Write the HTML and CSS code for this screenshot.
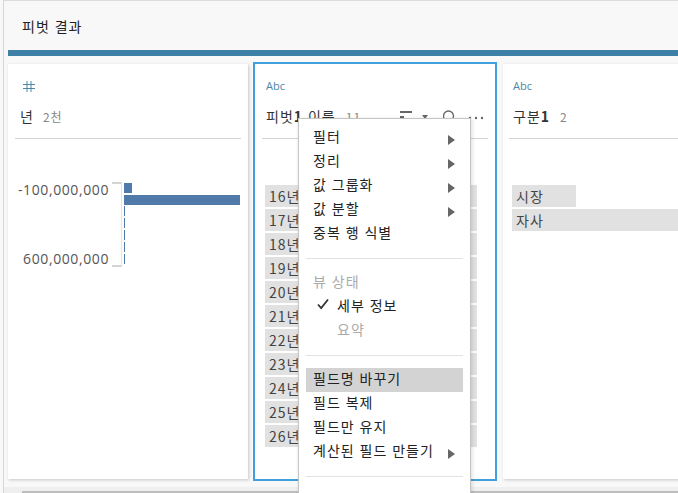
FILE: index.html
```html
<!DOCTYPE html>
<html lang="ko">
<head>
<meta charset="utf-8">
<title>피벗 결과</title>
<link rel="stylesheet" href="styles.css">
</head>
<body>
<div class="app">
  <header class="head">피벗 결과</header>
  <div class="bar"></div>
  <main class="cards">
    <section class="card c1">
      <div class="type num">
        <svg width="12" height="11" viewBox="0 0 12 11"><path d="M4 0v11M8 0v11M0 3.5h12M0 7.5h12" stroke="#4a87a8" stroke-width="1" fill="none"/></svg>
      </div>
      <div class="title"><span class="name">년</span><span class="count">2천</span></div>
      <div class="chart">
        <div class="axis-labels"><span>-100,000,000</span><span>600,000,000</span></div>
        <div class="axis"></div>
        <div class="bars">
          <div class="b small"></div>
          <div class="b big"></div>
          <div class="dash"></div>
        </div>
      </div>
    </section>
    <section class="card c2">
      <div class="type">Abc</div>
      <div class="title">
        <span class="name">피벗<b>1</b> 이름</span><span class="count">11</span>
        <span class="tools">
          <svg width="34" height="12" viewBox="0 0 34 12"><path d="M0 1h12v2H0zM0 6h4v3H0z" fill="#666"/><path d="M22 5h6l-3 4z" fill="#666"/></svg>
          <svg class="search" width="14" height="12" viewBox="0 0 14 12"><circle cx="6.5" cy="6" r="5" stroke="#666" stroke-width="1.3" fill="none"/></svg>
          <svg class="dots" width="16" height="4" viewBox="0 0 16 4"><circle cx="2" cy="2" r="1.2" fill="#666"/><circle cx="8" cy="2" r="1.2" fill="#666"/><circle cx="14" cy="2" r="1.2" fill="#666"/></svg>
        </span>
      </div>
      <ul class="vals">
        <li>16년</li><li>17년</li><li>18년</li><li>19년</li><li>20년</li><li>21년</li><li>22년</li><li>23년</li><li>24년</li><li>25년</li><li>26년</li>
      </ul>
    </section>
    <section class="card c3">
      <div class="type">Abc</div>
      <div class="title"><span class="name">구분<b>1</b></span><span class="count">2</span></div>
      <ul class="vals">
        <li class="short">시장</li><li>자사</li>
      </ul>
    </section>
  </main>
  <div class="scroll"><div class="thumb"></div></div>
</div>
<nav class="menu">
  <div class="item">필터<i class="arrow"></i></div>
  <div class="item">정리<i class="arrow"></i></div>
  <div class="item">값 그룹화<i class="arrow"></i></div>
  <div class="item">값 분할<i class="arrow"></i></div>
  <div class="item">중복 행 식별</div>
  <hr>
  <div class="item off">뷰 상태</div>
  <div class="item sub"><svg class="check" width="14" height="12" viewBox="0 0 14 12"><path d="M2 6.5l3.2 3.5L12 1.5" stroke="#333" stroke-width="1.8" fill="none"/></svg>세부 정보</div>
  <div class="item sub off">요약</div>
  <hr>
  <div class="item active">필드명 바꾸기</div>
  <div class="item">필드 복제</div>
  <div class="item">필드만 유지</div>
  <div class="item">계산된 필드 만들기<i class="arrow"></i></div>
  <hr>
</nav>
</body>
</html>
```
FILE: styles.css
```css
* { box-sizing: border-box; }
html, body { margin: 0; height: 100%; overflow: hidden; }
body {
  font-family: "Noto Sans CJK KR", "Open Sans", sans-serif;
  font-size: 14px;
  letter-spacing: 1px;
  color: #333;
  background: #f8f8f8;
}
.app {
  height: 493px;
  margin-left: 3px;
  border-left: 1px solid #d6d6d6;
  border-top: 1px solid #dcdcdc;
  display: flex;
  flex-direction: column;
}
.head {
  height: 49px;
  padding: 15px 0 0 18px;
  line-height: 20px;
  color: #222;
  flex: none;
}
.bar { height: 6px; margin-left: 4px; background: #3e7fa6; flex: none; }
.cards {
  display: flex;
  height: 417px;
  margin-top: 8px;
  padding-left: 4px;
  flex: none;
  align-items: flex-start;
}
.card {
  height: 415px;
  background: #fff;
  box-shadow: 1px 1px 3px rgba(0,0,0,.2);
  flex: none;
}
.c1 { width: 240px; padding: 0 7px; }
.c2 { width: 244px; margin-left: 5px; border: 2px solid #41a0dc; padding: 0 7px; height: 419px; margin-top: -2px; box-shadow: none; }
.c3 { width: 200px; margin-left: 6px; padding: 0 0 0 6px; }
.type {
  height: 46px;
  padding: 15px 0 0 4px;
  font: 500 11px/14px "Open Sans", sans-serif;
  letter-spacing: 0;
  color: #4a87a8;
}
.num { padding: 17px 0 0 8px; }
.num svg { display: block; }
.title {
  display: flex;
  align-items: center;
  height: 29px;
  border-bottom: 1px solid #d4d4d4;
  padding-bottom: 16px;
  color: #333;
  white-space: nowrap;
}
.title b { font-weight: 700; }
.name { padding-left: 4px; }
.count { margin-left: 10px; font-size: 12px; color: #888; }
.c1 .name { padding-left: 5px; }
.c1 .count { margin-left: 9px; }
.tools { margin-left: auto; display: flex; align-items: center; gap: 12px; padding-right: 4px; }
.search { margin-left: -4px; }
.dots { margin-top: 3px; }
.chart { display: flex; margin-top: 44px; height: 90px; }
.axis-labels {
  width: 94px;
  height: 89px;
  text-align: right;
  color: #555;
  display: flex;
  flex-direction: column;
  justify-content: space-between;
  line-height: 20px;
  font-family: "Open Sans", sans-serif;
  font-size: 14px;
  letter-spacing: .6px;
  margin-top: -3px;
  flex: none;
}
.axis {
  width: 10px;
  height: 85px;
  margin: -1px 0 0 3px;
  border-style: solid;
  border-color: #d4d4d4 #e4e4e4 #d4d4d4 transparent;
  border-width: 2px 1px 2px 0;
  flex: none;
}
.bars { margin-left: 2px; width: 116px; flex: none; }
.b { background: #4f7aa9; }
.small { width: 8px; height: 10px; }
.big { width: 116px; height: 10px; margin-top: 2px; }
.dash {
  width: 1px;
  height: 60px;
  margin-top: 1px;
  background: repeating-linear-gradient(#4f7aa9 0 10px, #fff 10px 12px);
}
.vals { list-style: none; margin: 46px 0 0; padding: 0; }
.vals li {
  height: 22px;
  margin-bottom: 2px;
  padding-left: 4px;
  background: #e1e1e1;
  line-height: 22px;
  color: #444;
}
.c2 .vals { margin-left: 3px; margin-right: 11px; }
.c3 .vals { margin-left: 3px; }
.c3 .short { width: 64px; }
.scroll { height: 6px; margin-top: 6px; padding: 4px 0 0 18px; background: #efefef; flex: none; }
.thumb { height: 2px; background: #bdbdbd; }
.menu {
  position: absolute;
  left: 298px;
  top: 118px;
  width: 173px;
  height: 380px;
  padding: 7px 7px 6px;
  background: #fff;
  border: 1px solid #c4c4c4;
  box-shadow: 1px 1px 4px rgba(0,0,0,.15);
}
.item {
  position: relative;
  height: 24px;
  line-height: 20px;
  padding-left: 7px;
  color: #222;
  white-space: nowrap;
}
.sub { padding-left: 31px; }
.off { color: #aaa; }
.active { background: #d3d3d3; }
.arrow {
  position: absolute;
  left: 142px;
  top: 9px;
  border-left: 7px solid #666;
  border-top: 5px solid transparent;
  border-bottom: 5px solid transparent;
}
.check { position: absolute; left: 10px; top: 3px; }
.menu hr { border: 0; border-top: 1px solid #e2e2e2; margin: 12px 0; height: 0; }
```
